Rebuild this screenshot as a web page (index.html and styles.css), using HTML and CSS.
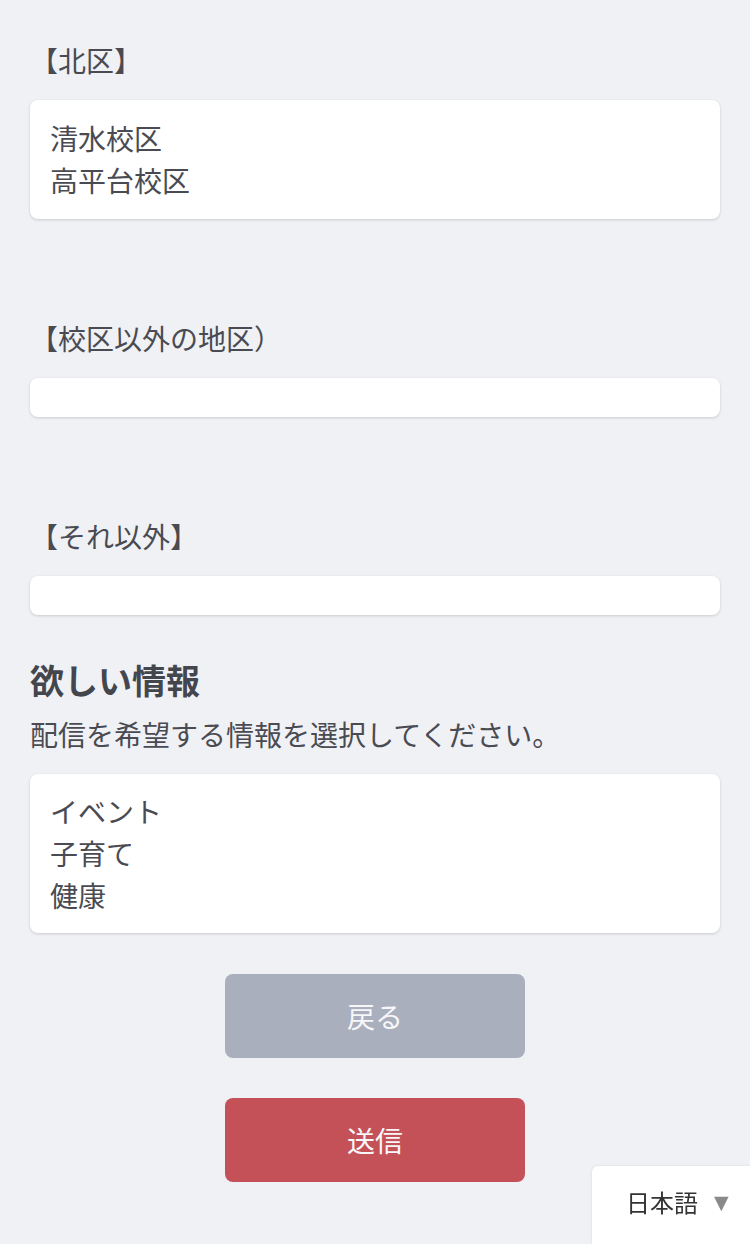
FILE: index.html
```html
<!DOCTYPE html>
<html lang="ja">
<head>
<meta charset="utf-8">
<title>配信設定</title>
<link rel="stylesheet" href="styles.css">
</head>
<body>
<main class="page">
  <section class="group">
    <div class="label">【北区】</div>
    <div class="box">
      <div class="item">清水校区</div>
      <div class="item">高平台校区</div>
    </div>
  </section>
  <section class="group group-gap">
    <div class="label">【校区以外の地区）</div>
    <div class="box box-empty"></div>
  </section>
  <section class="group group-gap">
    <div class="label">【それ以外】</div>
    <div class="box box-empty"></div>
  </section>
  <section class="wants">
    <h2 class="heading">欲しい情報</h2>
    <p class="desc">配信を希望する情報を選択してください。</p>
    <div class="box box-wants">
      <div class="item">イベント</div>
      <div class="item">子育て</div>
      <div class="item">健康</div>
    </div>
  </section>
  <div class="actions">
    <button class="btn btn-back" type="button">戻る</button>
    <button class="btn btn-send" type="button">送信</button>
  </div>
</main>
<div class="lang">
  <span class="lang-text">日本語</span>
  <span class="lang-arrow">▼</span>
</div>
</body>
</html>
```

FILE: styles.css
```css
* { box-sizing: border-box; }
html, body {
  margin: 0;
  padding: 0;
  background: #f0f1f5;
}
body {
  font-family: "Noto Sans CJK JP", "Noto Sans", sans-serif;
  color: #4a4b52;
  font-size: 28px;
  line-height: 42px;
}
.page {
  padding: 39px 30px 80px 30px;
}
.group {
  display: flex;
  flex-direction: column;
}
.group-gap {
  margin-top: 98px;
}
.label {
  font-size: 28px;
  line-height: 42px;
  margin-bottom: 19px;
}
.box {
  background: #ffffff;
  border-radius: 8px;
  box-shadow: 0 1px 3px rgba(0, 0, 0, 0.16);
  padding: 17px 20px 18px 20px;
}
.box-empty {
  height: 39px;
  padding: 0;
}
.item {
  line-height: 42px;
}
.wants {
  margin-top: 41px;
  display: flex;
  flex-direction: column;
}
.heading {
  margin: 0;
  font-size: 34px;
  line-height: 48px;
  font-weight: 700;
  color: #44464e;
}
.desc {
  margin: 9px 0 19px 0;
  font-size: 28px;
  line-height: 42px;
}
.box-wants {
  padding: 16px 20px 17px 20px;
}
.actions {
  margin-top: 41px;
  display: flex;
  flex-direction: column;
  align-items: center;
  gap: 40px;
}
.btn {
  width: 300px;
  height: 84px;
  border: none;
  border-radius: 8px;
  font-family: "Noto Sans CJK JP", "Noto Sans", sans-serif;
  font-size: 28px;
  color: #f7f7f9;
  padding: 0;
}
.btn-back {
  background: #a9afbc;
}
.btn-send {
  background: #c45058;
}
.lang {
  position: fixed;
  right: 0;
  bottom: 0;
  width: 158px;
  height: 78px;
  background: #ffffff;
  border-top-left-radius: 6px;
  box-shadow: 0 0 3px rgba(0, 0, 0, 0.1);
  display: flex;
  align-items: center;
  padding: 0 0 6px 34px;
  gap: 16px;
}
.lang-text {
  font-size: 24px;
  line-height: 30px;
  color: #333333;
}
.lang-arrow {
  font-size: 19px;
  line-height: 20px;
  color: #8a8a8a;
  font-family: "DejaVu Sans", sans-serif;
}
```
